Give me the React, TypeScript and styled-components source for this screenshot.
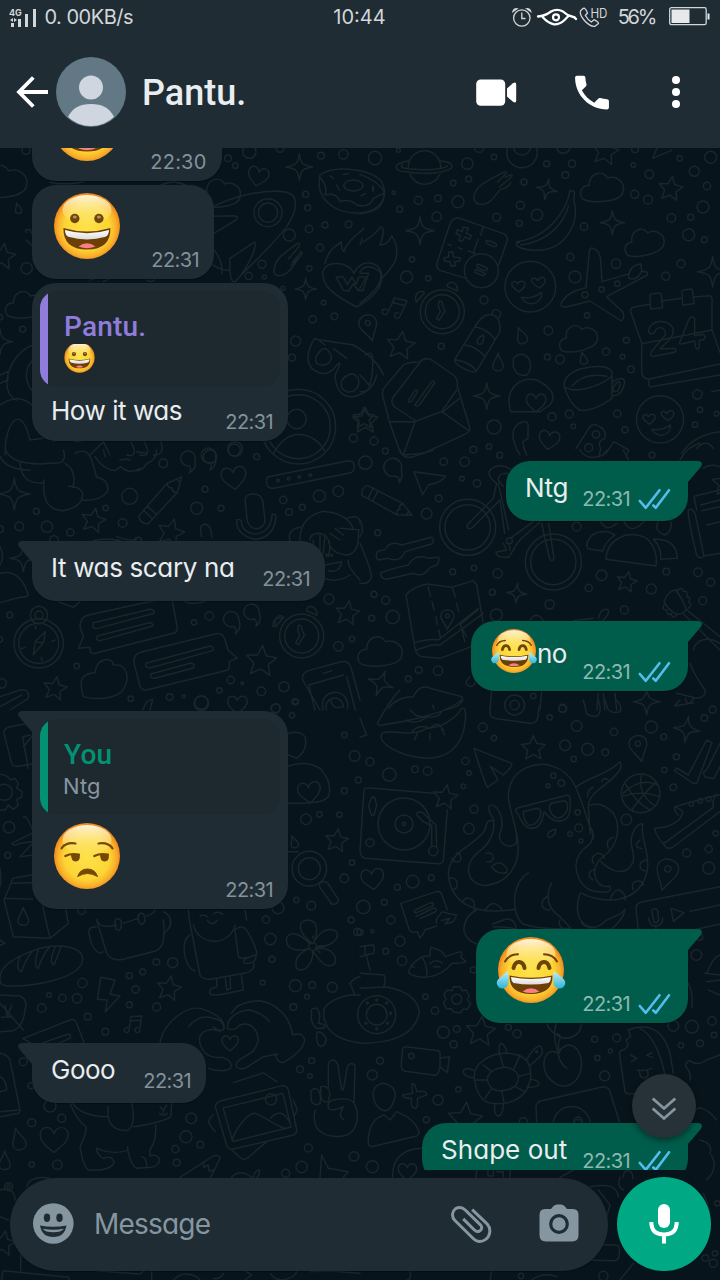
import React from 'react';
import styled, { createGlobalStyle } from 'styled-components';

const Global = createGlobalStyle`
  * { box-sizing: border-box; }
  body { margin: 0; background: #07141b; }
`;

const ui = `Inter, "Open Sans", "Liberation Sans", sans-serif`;

const Screen = styled.div`
  position: relative;
  width: 720px;
  height: 1280px;
  display: flex;
  flex-direction: column;
  overflow: hidden;
  background: #07141b;
  color: #e9edef;
  font-family: ${ui};
  font-feature-settings: 'cv11' 1;
`;

const Top = styled.header`
  position: relative;
  height: 148px;
  flex: none;
  background: #1f2c34;
`;

const StatusBar = styled.div`
  height: 34px;
  display: grid;
  grid-template-columns: 1fr auto 1fr;
  align-items: center;
  padding: 0 10px 0 9px;
  color: #d3d6d8;
  font-size: 20px;
  line-height: 34px;
`;

const StatusSide = styled.div<{ $end?: boolean }>`
  display: flex;
  align-items: center;
  justify-content: ${(p) => (p.$end ? 'flex-end' : 'flex-start')};
`;

const StatusText = styled.span<{ $track?: number; $ml?: number; $mr?: number }>`
  letter-spacing: ${(p) => p.$track ?? 0}px;
  margin-left: ${(p) => p.$ml ?? 0}px;
  margin-right: ${(p) => p.$mr ?? 0}px;
  white-space: nowrap;
`;

const AppBar = styled.div`
  height: 114px;
  display: flex;
  align-items: center;
  padding: 2px 40px 0 16px;
`;

const Contact = styled.h1`
  flex: 1;
  margin: 0 0 0 16px;
  padding-top: 1px;
  font: 500 36px/44px Roboto, sans-serif;
`;

const BarIcon = styled.svg<{ $ml?: number }>`
  display: block;
  flex: none;
  margin-left: ${(p) => p.$ml ?? 0}px;
`;

const WallpaperSvg = styled.svg`
  position: absolute;
  left: 0;
  top: 0;
  fill: none;
  stroke: #1a262b;
  stroke-width: 4.4;
  stroke-linecap: round;
  stroke-linejoin: round;
`;

const Messages = styled.main`
  position: relative;
  height: 1022px;
  flex: none;
  overflow: hidden;
  display: flex;
  flex-direction: column;
  justify-content: flex-end;
  padding: 0 32px;
`;

const List = styled.div`
  display: flex;
  flex-direction: column;
  margin-bottom: -13px;
`;

const Bubble = styled.article<{ $out?: boolean; $tail?: boolean; $w: number; $h: number }>`
  position: relative;
  flex: none;
  display: flex;
  flex-direction: column;
  width: ${(p) => p.$w}px;
  height: ${(p) => p.$h}px;
  align-self: ${(p) => (p.$out ? 'flex-end' : 'flex-start')};
  margin-top: ${(p) => (p.$tail ? 20 : 4)}px;
  background: ${(p) => (p.$out ? '#005d4b' : '#1f2c34')};
  border-radius: 24px;
  ${(p) => p.$tail && (p.$out ? 'border-top-right-radius: 0;' : 'border-top-left-radius: 0;')}
  box-shadow: 0 1px 1px rgba(0, 0, 0, 0.3);
`;

const TailSvg = styled.svg<{ $out?: boolean }>`
  position: absolute;
  top: 0;
  ${(p) => (p.$out ? 'right: -14px;' : 'left: -14px; transform: scaleX(-1);')}
`;

const BubbleRow = styled.div<{ $out?: boolean }>`
  flex: 1;
  display: flex;
  justify-content: space-between;
  padding: 0 ${(p) => (p.$out ? 17 : 14)}px 0 19px;
`;

const Body = styled.div<{ $top: number; $track?: number }>`
  display: flex;
  padding-top: ${(p) => p.$top}px;
  font-size: 26px;
  line-height: 32px;
  letter-spacing: ${(p) => p.$track ?? 0}px;
  white-space: nowrap;
`;

const EmojiSlot = styled.span<{ $large?: boolean }>`
  flex: none;
  margin-left: ${(p) => (p.$large ? -0.5 : 0)}px;
`;

const InlineText = styled.span`
  padding-top: 11px;
  margin-left: -1px;
`;

const Meta = styled.div<{ $out?: boolean; $low?: boolean }>`
  align-self: flex-end;
  display: flex;
  align-items: center;
  gap: 6px;
  height: 24px;
  margin-bottom: ${(p) => (p.$low ? 7 : 10)}px;
  font-size: 20px;
  line-height: 24px;
  color: ${(p) => (p.$out ? '#8fb9b0' : '#83929b')};
`;

const Time = styled.span<{ $wide?: boolean }>`
  letter-spacing: ${(p) => (p.$wide ? 0.2 : -0.6)}px;
  margin-right: ${(p) => (p.$wide ? 1.5 : 1)}px;
`;

const Quote = styled.div`
  display: flex;
  height: 96px;
  flex: none;
  margin: 8px 8px 0;
  border-radius: 17px;
  overflow: hidden;
  background: #1e292f;
`;

const QuoteBar = styled.div<{ $color: string }>`
  width: 8px;
  background: ${(p) => p.$color};
`;

const QuoteText = styled.div`
  display: flex;
  flex-direction: column;
  padding: 20px 0 0 16px;
  font-size: 22px;
  line-height: 28px;
  color: #8696a0;
`;

const QuoteName = styled.div<{ $color: string }>`
  font: 500 28px/32px Roboto, sans-serif;
  letter-spacing: 0.2px;
  color: ${(p) => p.$color};
`;

const QuoteBody = styled.span`
  margin: 1px 0 0 -1px;
`;

const QuoteEmoji = styled.div`
  height: 30px;
  margin-top: 1px;
  overflow: hidden;
  display: flex;
  align-items: flex-start;
  svg { margin: -3px 0 0 -1px; }
`;

const Footer = styled.footer`
  position: relative;
  flex: 1;
  display: flex;
  padding: 7px 9px 0 10px;
  justify-content: space-between;
`;

const Composer = styled.div`
  width: 598px;
  height: 93px;
  margin-top: 1px;
  border-radius: 47px;
  background: #1f2c34;
  display: flex;
  align-items: center;
  padding: 0 29px 1px 22px;
  box-shadow: 0 1px 1px rgba(0, 0, 0, 0.3);
`;

const Placeholder = styled.span`
  flex: 1;
  margin-left: 20px;
  font-size: 28px;
  line-height: 36px;
  letter-spacing: -0.8px;
  color: #8696a0;
`;

const MicButton = styled.button`
  width: 94px;
  height: 94px;
  padding: 0;
  border: 0;
  border-radius: 50%;
  background: #00a884;
  display: flex;
  align-items: center;
  justify-content: center;
`;

const ScrollDown = styled.button`
  position: absolute;
  left: 632px;
  top: 1074px;
  width: 64px;
  height: 64px;
  padding: 0;
  border: 0;
  border-radius: 50%;
  background: #273138;
  box-shadow: 0 3px 6px rgba(0, 0, 0, 0.4);
`;

/* ---------- Wallpaper doodles ---------- */

const Dots = ({ v }: { v: string }) => (
  <>
    {v.split(' ').map((s, i) => {
      const [x, y, r] = s.split(',');
      return <circle key={i} cx={x} cy={y} r={r} />;
    })}
  </>
);

type Place = { x: number; y: number; s?: number; a?: number };
const at = ({ x, y, s = 1, a = 0 }: Place) => `translate(${x} ${y}) rotate(${a}) scale(${s})`;
const shape = (d: string) => (p: Place) => (
  <path transform={at(p)} d={d} strokeWidth={4.4 / (p.s ?? 1)} />
);

const Star = shape('M0,-40 L11,-15 38,-12 18,6 24,33 0,19 -24,33 -18,6 -38,-12 -11,-15Z');
const Spark = shape('M0,-40 C4,-10 8,-6 40,0 C8,5 5,9 0,40 C-5,9 -8,5 -40,0 C-8,-6 -4,-10 0,-40Z');
const Heart = shape('M0,28 C-20,12 -34,0 -30,-16 C-26,-32 -6,-32 0,-14 C6,-32 28,-32 31,-14 C34,2 16,14 0,28Z');
const Cloud = shape('M-58,34 C-74,14 -60,-8 -40,-6 C-40,-44 0,-54 14,-28 C40,-38 68,-16 60,12 C54,42 -26,48 -58,34Z');
const Drop = shape('M0,-28 C4,-10 16,0 16,12 C16,30 -16,30 -16,12 C-16,0 -4,-10 0,-28Z');
const Pin = shape('M0,46 C-10,20 -28,8 -28,-12 C-28,-46 28,-46 28,-12 C28,8 10,20 0,46Z M8,-12 A8,8 0 1 1 -8,-12 A8,8 0 1 1 8,-12');
const Note = shape('M-18,24 V-28 L22,-36 V18 M-18,-12 L22,-20 M-18,24 A9,9 0 1 1 -24,16 M22,18 A9,9 0 1 1 14,10');
const Pencil = shape('M-80,-16 L40,-18 80,0 40,20 -80,18 Q-94,0 -80,-16Z M-60,-16 V18 M-44,-16 V18 M40,-18 Q30,-6 40,0 Q30,10 40,20 M66,-7 V7');
const Clock = shape('M66,0 A66,66 0 1 1 -66,0 A66,66 0 1 1 66,0 M51,0 A51,51 0 1 1 -51,0 A51,51 0 1 1 51,0 M-10,-32 Q0,-34 0,-22 L8,-2 -10,26 -18,20 -6,0 -12,-18Z M-78,-28 C-88,-60 -60,-66 -54,-56Z M14,-76 C16,-96 46,-92 46,-62Z');
const Quotes = shape('M-18,-6 A20,20 0 1 0 -34,8 Q-26,18 -34,28 Q-14,18 -18,-6 M38,-14 A20,20 0 1 0 22,0 Q30,10 22,20 Q42,10 38,-14');
const Face = shape('M76,0 A76,76 0 1 1 -76,0 A76,76 0 1 1 76,0 M-34,16 C-50,4 -60,-4 -54,-12 C-46,-20 -40,-14 -38,-8 C-32,-20 -14,-18 -16,-6 C-16,2 -26,8 -34,16Z M28,4 C10,-6 0,-14 4,-22 C10,-30 18,-24 22,-18 C28,-32 48,-30 44,-16 C44,-8 36,-2 28,4Z M-26,32 Q4,38 34,18 C36,56 -14,62 -26,32Z');
const Photo = shape('M-98,-36 L80,-80 Q96,-82 100,-68 L124,46 Q126,60 112,64 L-60,104 Q-76,106 -80,92 L-112,-18 Q-114,-30 -98,-36Z M-90,-16 L84,-58 108,40 -62,82Z M-64,78 C-50,40 -20,0 4,0 C30,10 60,34 90,44 M48,14 Q80,-20 104,26');

const Tile = ({ x, y, children }: { x: number; y: number; children: React.ReactNode }) => (
  <g transform={`translate(${x} ${y}) scale(0.33333)`}>{children}</g>
);

const Wallpaper = () => (
  <WallpaperSvg width="720" height="1280" viewBox="0 0 720 1280" aria-hidden="true">
    <Tile x={0} y={145}>
      <Dots v="78,16,12 684,40,10 706,62,8 748,20,20 840,10,12 963,32,10 1030,28,14 917,148,9 923,188,9 927,252,11 975,240,9 1046,238,10 868,270,18 960,308,11 786,358,12 928,370,8 746,393,11 793,396,6 80,370,17 849,430,6 971,473,7 938,523,11 1003,514,10 887,588,15 876,638,10 68,553,9 0,517,8 1060,880,12 705,912,22 630,935,20 804,203,42 804,203,29 895,845,112 895,845,96 890,822,29" />
      <Star x={8} y={335} a={8} /><Star x={1096} y={828} />
      <Spark x={898} y={66} /><Spark x={917} y={432} s={0.8} /><Spark x={0} y={590} s={0.95} />
      <Heart x={774} y={95} a={12} /><Cloud x={10} y={110} s={1.15} /><Cloud x={660} y={145} s={1.0} /><Cloud x={78} y={480} s={0.95} />
      <Drop x={54} y={190} s={0.6} a={-15} />
      <path d="M630,190 C700,152 800,130 860,142 C900,152 890,200 860,245 C810,310 760,350 705,410 M642,214 L700,212 Q720,215 708,225 L642,265 M690,340 L762,292 Q770,290 765,306 C755,345 720,400 705,410 C690,416 688,370 690,340 M642,315 Q670,350 665,385 M610,340 Q660,380 690,375" />
      <path d="M822,382 C820,340 860,320 892,296 Q904,290 896,306 L866,342 M902,320 Q912,322 900,334 L872,362 M904,320 L878,350 M822,382 C830,402 860,390 878,366 L900,334" />
      <path d="M960,90 C1000,60 1110,70 1145,110 C1165,150 1150,195 1080,205 C1000,206 945,160 960,90Z M962,100 Q985,128 975,150 Q1010,140 1020,170 Q1050,160 1070,180 Q1110,190 1120,160 L1150,145 M1088,125 A28,16 0 1 1 1032,118 A28,16 0 1 1 1088,125 M990,92 L1000,100 M1010,120 L1018,135 M1120,125 V138 M1030,88 L1045,86" />
      <path d="M1070,486 C1000,450 960,420 970,375 C985,345 1045,350 1062,385 C1080,340 1140,345 1145,390 C1150,430 1110,465 1070,486Z M975,355 C985,310 1015,300 1024,290 Q1022,310 1032,320 C1040,290 1070,270 1092,250 M1008,396 H1030 L1042,418 1056,396 1068,418 1076,396 H1098 L1076,438 1060,416 1046,438 1030,436Z" />
      <path d="M942,582 L1060,600 Q1130,640 1150,690 M942,582 Q910,640 935,670 Q980,705 1010,660 Q1030,640 1005,690 Q1010,760 1060,755 Q1120,740 1130,690 M960,618 C940,640 945,660 965,660 C990,660 1000,640 990,625 Q975,600 960,618 M1045,690 C1020,700 1015,730 1040,740 C1070,745 1080,720 1075,700 Q1060,680 1045,690 M948,580 L975,600 M1000,610 L1040,640" />
      <path d="M820,925 Q850,872 895,868 Q950,872 975,920 M840,772 Q790,800 800,890 M100,600 C30,620 -10,740 50,765 M98,645 Q60,690 98,740 M0,690 L24,680 V705 L0,715 M0,780 Q60,740 100,785 M16,930 C10,850 60,760 90,885 L130,880 M160,890 Q190,870 230,890 L290,880 M270,930 L310,890 330,930 M390,885 Q420,940 380,930 M430,885 Q460,940 420,930 M480,885 Q500,930 460,930" />
      <path d="M80,262 Q70,250 90,255 L110,290 M78,285 L100,305 M270,405 L290,400 M310,410 L330,400 M440,405 Q455,415 465,403 M480,122 Q520,100 560,122 M150,112 Q200,122 250,110" />
    </Tile>
    <Tile x={360} y={145}>
      <Dots v="45,39,20 115,16,6 322,56,17 402,36,8 326,102,9 280,114,8 357,8,14 101,143,5 175,166,12 234,160,10 294,170,18 119,193,9 230,215,14 410,217,12 492,111,9 560,56,9 636,56,11 616,90,10 481,181,12 531,210,17 478,235,9 486,22,46 610,5,20 672,245,11 825,13,10 820,60,7 868,88,13 824,148,12 864,164,13 959,40,8 1052,37,18 1003,79,15 1041,123,11 1029,186,18 992,217,9 934,219,13 986,269,18 1033,284,9 963,356,12 917,394,12 768,356,14 631,336,11 645,396,18 725,433,8 772,416,8 675,449,9 156,343,8 205,400,8 140,396,18 372,465,12 244,604,9 681,511,8 565,557,13 562,636,9 600,643,13 738,620,11 788,635,7 799,586,9 813,673,10 576,815,12 628,807,12 640,844,7 772,806,11 795,854,9 402,846,21 387,905,8 340,914,10 42,888,12 76,918,9 1012,748,14 1020,794,8 1070,806,7 1005,839,8 364,377,51 708,868,11 686,908,12 486,4,26" />
      <Star x={736} y={20} a={10} s={1.05} /><Star x={932} y={132} a={8} s={0.95} /><Star x={122} y={602} s={1.1} a={8} /><Star x={12} y={820} s={0.85} />
      <Spark x={560} y={133} s={0.8} a={12} /><Spark x={180} y={257} s={1.05} /><Spark x={757} y={233} s={0.9} /><Spark x={1058} y={380} s={1.15} /><Spark x={380} y={753} />
      <Cloud x={728} y={128} s={1.02} /><Cloud x={854} y={292} s={0.95} a={-8} /><Cloud x={656} y={580} s={0.92} a={-8} />
      <Face x={511} y={425} /><Face x={900} y={823} s={0.93} />
      <Clock x={247} y={500} />
      <Note x={108} y={490} s={0.95} a={25} /><Pin x={26} y={545} s={0.95} a={-15} />
      <Drop x={484} y={572} s={0.95} a={-20} /><Drop x={414} y={652} /><Drop x={670} y={640} s={0.7} a={-12} /><Heart x={567} y={886} a={8} /><Heart x={528} y={774} s={0.95} />
      <path d="M145,66 A48,48 0 0 1 242,66 M145,48 C90,56 105,82 140,80 C190,90 280,84 276,62 Q270,50 242,48 M128,58 C110,72 150,72 190,74 C230,74 260,68 262,62 M150,88 Q165,118 195,118 Q225,116 240,88" />
      <path d="M342,160 C340,120 400,100 430,82 Q442,76 436,88 L412,112 M436,96 L452,90 Q462,90 452,98 L418,126 M452,112 Q450,125 420,134 C400,160 390,175 370,178 Q344,180 342,160 M0,88 Q50,105 72,138 Q78,200 0,206 M38,122 V138 M4,152 L16,146" />
      <path d="M470,290 C560,280 620,200 630,136 L643,140 642,168 C660,230 620,310 540,316 Q480,316 470,300 Q466,290 478,292 M482,300 C560,290 610,240 626,182" />
      <path d="M318,400 L240,376 Q226,368 232,350 L270,236 Q278,216 300,220 L430,266 Q444,272 442,286 L416,360 M370,245 L362,270 M355,282 L344,312 340,326 M264,298 L274,302 M295,308 L306,312 M325,318 L345,325" />
      <path d="M310,246 L325,250 318,264 334,272 330,283 314,276 306,290 296,286 302,272 288,264 292,254 306,260Z M266,322 L278,320 280,336 300,338 300,348 284,350 286,362 274,364 270,350 254,348 252,338 266,336Z M378,288 Q385,284 408,296 Q414,306 400,304 L380,296Z M352,358 Q360,358 382,370 Q384,378 370,376 L350,366Z M346,374 Q356,374 376,386 Q376,394 364,390 L344,382Z" />
      <path d="M678,428 L688,320 Q690,300 710,316 Q722,326 722,350 L726,410 L808,386 Q810,362 842,356 L846,380 Q866,378 862,390 L740,455 788,500 Q796,520 784,528 L690,468 620,486 Q600,488 604,474 Q620,440 678,428 M808,386 Q800,404 820,402 Q840,396 842,380" />
      <path d="M845,594 L812,500 Q810,490 822,486 L870,478 M904,468 L966,460 M1002,456 L1048,452 Q1058,454 1056,470 V555 L1090,650 M845,594 V684 Q850,704 868,702 L1090,655 M868,704 L866,720 Q870,730 882,724 L1080,690 M845,596 L1056,555 M870,452 Q868,446 880,446 L896,444 Q902,442 904,452 L908,488 872,492Z M966,440 Q966,434 976,434 L992,432 Q998,432 998,440 L1002,476 968,480Z" />
      <path d="M866,560 C866,520 935,520 940,556 C940,580 920,590 900,612 L944,610 Q952,616 944,622 L882,634 Q868,636 874,620 L916,570 C920,545 890,540 884,562 Q870,572 866,560 M960,590 L988,520 Q996,510 1004,520 L1004,572 1030,568 Q1040,576 1030,584 L1018,586 V608 Q1010,618 1006,604 L1004,588 968,596 Q954,600 960,590Z" />
      <path d="M286,640 L345,545 Q370,500 400,510 Q424,520 420,560 L350,678 Q340,688 300,664 Q280,652 286,640 M286,644 Q330,650 350,678 M345,546 Q380,550 404,582 M315,600 Q350,605 374,634 M396,506 Q400,488 414,496 Q428,500 418,518 M352,596 Q348,580 370,570 Q374,590 362,598Z" />
      <path d="M70,760 Q62,740 76,724 L130,660 Q144,650 170,652 M176,652 Q200,632 220,648 L280,690 Q294,700 292,724 L330,850 Q330,862 310,870 L190,925 130,930 M180,652 L100,756 Q90,770 104,786 L168,828 M290,735 L245,800 168,828 M88,830 H165 L130,930 M88,830 L70,760 M88,830 L122,925 M245,800 L328,858 M298,760 L250,800 M145,766 L165,736 Q174,732 172,742 L155,768 Q146,776 145,766 M165,780 L215,710 Q224,704 224,714 L178,780 Q168,788 165,780" />
      <path d="M460,640 Q485,615 506,640 Q520,670 500,690 Q470,696 460,665Z M452,800 C430,720 490,695 530,705 Q600,740 570,780 L540,800 Z M612,724 Q610,690 660,672 Q740,654 756,680 V760 Q700,800 660,796 Q630,780 612,724 Q640,745 700,724 Q740,710 756,692 M636,724 Q670,680 740,694 M756,712 Q790,690 794,710 Q786,756 756,752 M762,722 Q780,700 780,718 Q776,746 760,738Z" />
      <path d="M0,380 Q20,350 60,380 Q75,420 0,475 M0,300 Q5,290 6,280 M10,290 Q40,275 62,245 Q78,250 60,300 Q85,300 95,272 Q120,310 105,350 Q95,370 65,400 M0,385 H26 L8,438 0,436 M15,630 Q35,615 38,640 Q40,690 28,720 L0,690 M0,740 Q30,740 30,722 M878,40 L895,0 M878,40 L935,16" />
      <path d="M480,930 C450,880 450,840 490,830 Q508,828 504,850 L504,880 488,890 Q490,910 500,930 M648,910 L690,845 Q700,832 720,846 Q740,856 734,880 Q710,890 722,910 L718,930 M738,925 L762,890 806,915 800,930 M965,925 Q1000,870 1080,860 M1010,910 Q1040,880 1060,910 M1055,740 L1080,735" />
    </Tile>
    <Tile x={360} y={450}>
      <Dots v="16,38,20 251,35,11 314,35,14 419,16,9 306,86,7 351,100,11 236,145,10 200,191,16 53,248,9 650,230,13 876,15,9 278,365,9 342,354,8 413,370,14 725,376,16 874,417,15 686,414,11 793,480,12 569,463,14 397,427,9 409,495,18 42,433,9 77,451,12 98,501,20 35,505,9 919,365,10 1014,367,13 1052,397,12 1028,452,12 176,660,10 234,662,14 145,686,9 323,232,84 323,232,68 580,336,84 580,336,68 448,272,9 520,738,8 608,775,12 464,765,14 464,765,30" />
      <Star x={800} y={396} s={0.8} a={12} /><Star x={1095} y={100} />
      <Spark x={470} y={430} s={0.75} a={5} /><Spark x={62} y={700} a={20} /><Spark x={860} y={755} />
      <Cloud x={62} y={605} s={1.05} /><Pencil x={85} y={158} a={28} /><Pin x={262} y={506} s={0.7} />
      <path d="M118,98 Q120,80 105,78 A27,27 0 1 1 124,60 Q130,80 118,98 M162,65 L256,78 Q250,95 205,105 L188,134Z M120,0 Q130,30 160,20 L220,0" />
      <path d="M322,224 L400,145 410,100 Q380,80 390,60 Q420,35 455,60 Q460,75 440,70 Q415,70 415,90 L430,110 M336,234 L420,150 434,250 M322,224 Q318,240 336,234 M415,100 L446,240 M465,290 L480,270 540,215 M520,215 L455,262 M430,280 L440,300 408,306 Q408,320 430,322 L446,322 464,294 M545,220 L568,325 Q576,338 582,325 L566,220 M448,285 L450,300" />
      <path d="M50,310 Q50,300 75,300 Q90,270 125,285 L215,262 Q226,270 215,282 L135,305 Q120,340 85,325 L55,330 Q46,325 50,310 M62,370 Q70,362 145,345 Q165,310 205,325 L235,322 Q242,330 230,345 L210,352 Q190,384 160,370 L80,388 Q62,386 62,370" />
      <path d="M738,328 C740,270 800,235 860,265 Q895,300 888,348 L738,328 M680,285 Q690,240 745,245 L765,255 Q735,275 728,303 L684,296Z M880,268 Q950,265 952,325 L902,328 Q905,290 880,268 M720,212 Q740,250 770,220 M790,210 Q810,260 855,212 M895,212 Q880,245 915,255 Q940,240 932,212" />
      <path d="M985,180 Q982,200 1010,315 Q1020,330 1032,318 L1005,190 Q995,172 985,180 M1002,140 L1010,180 M1005,138 L1080,120 M1032,318 L1080,310 M1022,165 L1080,150 M1025,182 L1080,170 M1040,225 L1080,215 M960,30 Q980,-10 1020,-20 M1030,55 Q1050,40 1080,50 M660,0 Q680,35 730,15 L740,0 M790,0 L805,30" />
      <path d="M138,435 Q160,410 200,402 L275,412 340,392 350,405 370,520 M138,435 L165,595 Q170,620 190,620 L240,625 360,580 M165,578 Q210,565 235,570 L355,475 M170,600 Q220,580 240,585 L370,490 M355,478 L300,525 320,560 M204,410 L212,440 M216,455 L222,480 M228,500 L232,525 M236,540 L242,565 M278,415 L286,440 M290,460 L296,485 M306,540 L314,575" />
      <path d="M912,455 Q925,420 948,420 Q980,470 978,478 Q965,498 945,490 Q925,480 912,455 M978,478 L1080,560 M968,490 L1080,600 M950,425 Q965,405 970,425 Q985,420 980,440 Q995,440 986,458 Q1000,462 985,475 M912,465 Q905,480 920,480 Q920,500 934,490 Q935,510 950,495 M1000,600 Q1010,560 1060,570 L1080,580 M990,640 Q1000,670 1035,720 Q1040,740 1010,745 L950,730 M975,745 Q985,775 1000,745 M0,280 Q30,350 35,380 Q25,405 0,400 M0,210 Q15,240 0,260" />
      <path d="M85,775 Q110,740 160,740 Q180,700 210,715 L305,740 Q315,752 290,770 L255,780 M390,780 L395,720 M540,780 L545,725 M710,780 L715,730 M735,780 L730,730 M770,780 L765,730 M640,512 L700,505 M715,505 Q725,470 745,480 Q748,495 728,512 M510,510 Q530,480 550,512 M345,690 A14,14 0 1 1 318,695 L330,680" />
    </Tile>
    <Tile x={0} y={450}>
      <Dots v="490,40,13 770,20,9 703,0,18 389,139,24 368,219,13 590,175,18 615,118,9 663,175,9 109,184,9 58,229,13 141,230,17 211,247,11 317,174,8 0,238,10 850,150,11 958,138,18 1015,124,16 867,186,10 907,172,9 162,270,13 414,272,10 987,447,15 628,498,13 582,517,8 1015,589,14 1056,567,8 230,648,8 692,690,11 727,700,4 784,724,13 852,710,15 658,721,8 509,741,10 551,739,5 392,746,8 604,760,22 885,755,9 29,495,9 5,700,14 0,568,8 827,775,14 116,580,74 116,580,60 117,495,26 117,495,12 834,92,4 866,86,4 898,81,4 931,75,4 980,316,3 995,316,3" />
      <Star x={280} y={212} s={0.95} a={12} /><Star x={512} y={248} a={15} s={1.05} /><Star x={784} y={634} s={1.2} a={5} /><Star x={1042} y={490} s={0.95} a={8} /><Star x={165} y={716} s={0.92} a={10} />
      <Spark x={43} y={132} s={1.18} /><Spark x={70} y={325} />
      <Heart x={702} y={85} s={1.2} a={-8} /><Heart x={712} y={765} s={0.95} />
      <Quotes x={605} y={38} s={1.1} /><Quotes x={738} y={512} s={1.15} a={-12} />
      <Pencil x={487} y={145} s={1.08} a={-48} /><Clock x={905} y={558} />
      <path d="M805,80 L1045,32 Q1064,32 1062,52 Q1064,66 1045,70 L825,114 Q800,118 800,98 Q798,86 805,80 M735,150 Q738,130 762,132 Q782,132 788,152 L795,208 Q795,234 770,236 Q748,236 742,212Z M710,210 Q708,255 765,268 Q824,262 828,200 Q826,190 816,194 Q814,244 768,252 Q725,248 724,212 Q716,206 710,210" />
      <path d="M0,20 Q20,60 90,60 M18,0 Q30,40 120,42 L180,38 Q200,30 190,0 M60,40 Q65,105 130,98 L132,90 M195,40 Q230,60 220,110 L205,108 M132,98 Q125,180 190,182 Q250,170 248,130 Q240,110 218,112 M225,10 Q260,-10 275,30 L290,82 Q330,90 322,125 Q300,155 248,150 M285,20 Q310,60 345,62 L362,50 Q390,75 420,55 M470,0 Q470,30 440,40 Q430,60 410,62 M310,0 L316,20 M360,30 Q380,25 390,30 M410,5 L440,10" />
      <path d="M870,272 Q860,240 900,232 M900,270 Q900,200 970,184 Q1040,190 1060,235 M930,270 Q930,250 960,250 Q1000,260 985,320 M940,270 V300 M960,255 V310 M975,255 L970,310 M990,250 L1020,270 M1005,235 L1030,255 M1040,205 Q1080,190 1080,220 M1020,235 L1080,240 M985,270 Q990,310 1040,315 Q1080,310 1075,240 M975,345 Q1000,340 1025,335 Q1020,370 985,362 M975,385 Q1010,400 1050,375 M1045,330 Q1040,350 1080,390 M605,260 Q595,225 615,222 Q635,225 635,262 M280,272 Q320,262 360,272" />
      <path d="M0,370 Q60,355 85,435 Q80,442 60,442 L0,458 M0,290 Q15,320 0,345 M235,595 L250,560 240,530 Q240,500 265,495 L515,440 532,535 Q534,545 520,550 L285,610 Q268,612 270,592Z M280,518 L450,478 Q464,478 462,490 L290,536 Q274,536 280,518 M292,558 L448,518 Q460,518 458,528 L300,572 Q286,572 292,558" />
      <path d="M402,640 Q398,612 425,606 L645,552 Q668,546 675,570 L684,600 712,624 688,634 688,650 Q688,660 675,662 L440,720 Q425,722 420,708Z M438,640 L630,588 Q644,590 638,602 L450,654 Q434,654 438,640 M452,672 L570,640 Q588,640 580,654 L465,685 Q450,686 452,672 M175,455 L220,472 240,455 M555,455 Q580,468 620,452" />
      <path d="M136,545 L130,578 100,614 106,574Z M108,575 L130,580 M107,528 V538 M64,596 L76,592 M123,622 L127,632 M155,574 L166,570 M250,740 C235,690 245,670 285,668 C290,620 340,620 340,645 C385,640 392,690 365,725 C330,755 265,745 250,740 M0,740 L60,720 Q90,715 85,745 L30,780 M0,770 L65,735 M428,780 L440,755 458,748 450,780" />
      <path d="M960,780 L908,690 Q904,670 925,662 L1020,636 Q1045,630 1052,650 L1080,750 M945,780 L926,705 1030,675 M970,670 L996,662 M1040,680 L1066,780 M968,780 V755 A38,38 0 1 1 1042,775 M980,780 A26,26 0 1 1 1030,772 M992,752 Q1000,780 1024,770 M820,530 Q815,500 850,505 M350,260 Q390,275 410,268" />
    </Tile>
    <Tile x={0} y={700}>
      <Dots v="27,382,17 23,466,9 13,277,24 827,25,13 876,46,8 604,8,20 1064,168,16 1075,240,9 1033,272,9 918,358,16 958,343,8 1018,344,8 928,506,52 928,506,33 1056,488,8 1033,535,13 889,600,8 934,617,13 834,623,18 798,659,11 811,717,17 1053,660,9 1072,696,11 938,740,12 1033,105,8 245,632,11 887,5,8" />
      <Star x={1010} y={422} s={0.9} a={8} /><Drop x={882} y={426} s={0.7} a={-20} /><Drop x={70} y={650} /><Heart x={928} y={278} s={1.1} a={-8} />
      <path d="M0,222 Q28,228 30,240 L45,235 55,250 50,265 66,275 65,292 50,298 55,315 40,328 25,315 15,330 0,330 M12,100 Q10,85 30,80 L95,68 M12,100 L35,190 Q40,202 60,198 L95,192 M68,110 L92,105 M68,112 L85,205 M95,110 L70,140 M70,352 Q78,346 84,360 L98,390 M35,430 L95,400 M35,430 Q40,440 60,430 L95,425 M60,470 L98,430 M60,470 L98,465" />
      <path d="M12,600 Q30,560 38,535 L95,525 M12,600 L40,710 150,715 205,670 195,620 M15,595 L98,598 M125,605 L150,715 M38,550 L95,548 M0,505 Q5,540 0,560 M0,720 L15,730 0,735" />
      <path d="M290,660 Q300,688 350,675 M370,670 L415,655 M440,648 Q465,640 465,628 M345,665 Q345,655 354,656 Q362,656 364,666 V680 Q360,694 352,690 Q345,690 345,665 M415,650 Q415,640 424,640 Q432,640 434,652 V665 Q428,676 422,672 Q415,670 415,650 M290,680 Q260,680 268,705 M490,635 Q520,650 510,680" />
      <path d="M565,630 L568,660 M735,630 L740,660 M600,650 Q608,640 622,650 M640,642 Q650,632 668,642 M962,548 Q975,540 985,552 L1015,598 Q1015,615 995,612 L960,562 Q956,552 962,548 M865,455 H895 M865,310 Q930,310 950,305 M865,198 Q920,180 960,205 Q1000,250 985,290 Q970,305 950,305 M865,100 Q900,90 915,110 Q925,150 890,175 L865,165" />
    </Tile>
    <Tile x={360} y={700}>
      <Dots v="607,26,11 569,52,8 368,82,13 402,114,8 650,78,16 762,96,11 615,136,16 683,148,18 736,157,10 641,177,8 316,183,11 327,219,7 310,259,7 30,185,12 88,224,20 165,208,10 203,213,13 342,328,12 327,386,16 874,81,18 911,110,9 1033,54,10 1058,29,10 949,170,9 913,210,8 940,262,10 799,359,16 132,372,78 132,372,27 132,372,5 30,428,12 220,453,14 214,533,9 158,545,19 112,562,9 10,621,20 73,607,9 842,280,58 980,459,12 1046,447,11 1046,504,18 1067,400,8 994,312,7 1020,303,7 1046,297,7 564,257,6 604,249,10 580,227,8 653,337,8 656,384,12 630,402,7 663,423,6" />
      <Star x={520} y={145} s={0.95} /><Star x={256} y={292} s={0.95} a={8} /><Spark x={980} y={88} a={8} />
      <Heart x={38} y={538} s={1.1} a={-8} />
      <path d="M52,70 Q90,0 120,-30 M52,70 Q52,78 66,75 C140,65 260,40 305,0 M66,100 C90,85 150,115 200,85 C250,85 290,50 305,25 Q320,20 316,60 C310,140 260,180 190,174 C120,168 50,130 66,100 M150,30 L170,48 M140,60 Q160,75 190,58 L200,50 Q235,55 244,36 M218,15 L222,28 M165,45 L190,52 M155,95 Q180,70 210,85 Q235,60 250,90 M172,100 L163,120 M210,100 V120 M245,88 L254,104" />
      <path d="M12,270 Q15,262 30,264 L220,280 M262,330 L250,480 Q248,492 235,491 L15,475 Q0,470 0,450 L12,270 M38,290 Q46,290 46,300 L50,315 46,330 42,345 Q36,352 32,340 L26,318 32,300Z M170,340 Q185,330 195,345 L228,375 230,440 M215,375 V440 M170,345 L190,365 215,378" />
      <path d="M342,145 L455,190 Q458,200 430,225 L392,200 414,240 382,262 Q370,240 342,145 M468,430 C480,400 445,330 445,285 C450,200 540,180 580,200 C650,220 660,300 690,380 Q710,420 680,440 C650,460 640,500 655,530 C670,570 700,580 745,575 Q756,570 748,558 Q730,565 712,545 C690,510 715,480 735,465 C780,430 780,370 760,340 Q730,305 690,315 M650,260 C690,230 750,220 778,186 Q785,185 782,205 C760,250 690,270 685,315 L690,400" />
      <path d="M466,332 Q466,325 480,322 L620,286 Q632,284 630,300 C635,350 620,362 595,364 C565,360 560,340 552,335 C545,380 530,385 510,385 C485,380 480,345 466,332Z M490,335 L530,325 Q545,325 542,345 Q530,380 505,375 Q490,360 490,335 M568,320 Q570,310 580,308 L612,302 Q625,302 622,330 Q610,355 590,354 Q570,345 568,320 M563,402 Q570,390 588,388 Q586,408 570,412 Q562,412 563,402" />
      <path d="M468,430 C450,450 410,430 420,400 Q435,365 415,330 Q400,310 390,316 Q380,330 400,355 Q410,420 350,460 C310,500 320,550 375,557 C440,550 490,500 470,400 M400,365 Q390,355 380,370 C375,430 270,440 265,520 C270,600 330,650 465,628 M275,475 Q290,495 302,480 Q305,460 290,458 M268,535 Q290,530 292,555 Q290,570 275,568 M308,605 Q320,585 340,602 Q345,620 342,630 M376,630 Q400,590 428,632 M378,460 Q400,455 400,475 Q395,490 380,485 M395,500 Q420,475 440,505 L440,518 Q410,525 395,500" />
      <path d="M505,518 C450,555 455,650 490,672 Q540,690 630,685 M575,548 C550,600 570,630 600,650 L632,685 M565,588 Q540,600 548,620 Q555,632 570,630 M600,660 Q590,670 610,688 M350,630 Q310,650 312,695 Q320,720 350,732 M398,672 Q420,665 430,660 Q450,650 465,670 L468,685 M400,680 Q440,680 465,686 M660,580 C640,640 660,680 700,682 M665,580 C720,610 840,620 862,510 C870,450 840,420 848,372 Q840,368 825,385 C790,440 850,470 800,510 C770,525 740,500 722,485 M840,420 Q825,430 832,442 L845,446 M858,480 Q835,485 842,505 Q850,515 860,512 M820,570 Q810,545 835,542 Q850,545 850,555 M750,600 Q760,570 775,570 Q795,575 796,600 M700,490 Q690,470 712,460 Q730,460 732,475 M745,445 Q735,420 760,412 M688,380 Q700,385 700,415 M682,290 Q685,265 700,262 M725,245 Q730,230 745,240 M665,670 Q700,700 740,660 Q790,640 795,628 Q790,660 750,690 M700,540 Q680,530 692,512 L702,510" />
      <path d="M790,280 Q840,230 895,255 M785,290 Q840,270 900,290 M845,225 Q830,280 885,318 M795,250 Q830,310 870,330 M815,330 Q850,280 890,245" />
      <Pin x={836} y={142} s={0.95} a={-12} /><Pin x={920} y={520} s={1.15} a={15} />
      <path d="M943,212 L950,204 985,225 1040,120 1056,128 1010,250 1000,250Z M1035,230 Q1025,215 1040,210 L1080,130 M1035,230 L1062,236 1080,200 M945,320 L1060,288 1080,285 M945,320 Q970,330 968,340 Q955,380 885,385 Q882,400 920,444 L935,444 1080,335 M912,430 L1060,322 Q1055,300 1070,282 M945,320 Q940,330 955,345" />
      <path d="M122,610 L230,575 Q242,572 246,585 L262,630 M122,610 L148,690 Q155,700 172,695 L180,714 Q190,705 195,690 L230,678 M165,630 L212,608 Q225,608 218,618 L170,638 Q160,640 165,630 M168,650 L222,624 Q234,626 226,636 L180,656 M230,670 Q225,655 240,645 Q245,630 262,640 L290,645 280,665 255,672 270,655 245,662" />
      <path d="M835,690 L828,625 Q828,610 845,606 L1080,560 M840,690 H980 M990,634 L1080,615 M1000,690 L1080,672 M875,632 Q885,620 893,632 L896,660 Q892,672 882,666Z M866,655 Q870,680 890,678 Q908,675 908,655 M888,680 V690 M933,625 L972,638 940,664Z M390,20 V40 Q392,54 410,56 L510,70 Q530,72 534,50 L537,20 M670,0 L680,40 Q690,52 710,48 Q722,44 720,20 L716,0 M735,0 L745,30 Q760,42 780,35 Q788,20 770,0 M945,16 L960,0 M945,18 L1000,8 M0,55 L20,105 0,112" />
    </Tile>
    <Tile x={360} y={920}>
      <Dots v="37,34,5 120,63,15 77,94,9 126,122,14 93,0,12 0,37,9 196,230,8 225,272,11 250,337,18 290,327,10 281,373,11 60,422,10 37,465,15 445,322,9 471,341,12 295,508,8 234,540,15 199,599,9 704,358,9 770,354,12 751,393,6 712,414,8 734,468,15 940,318,16 996,320,19 1056,303,13 963,376,8 1020,370,10 1062,345,8 1019,52,9 1009,105,16 37,740,18 50,284,57 50,284,31 290,238,15 154,408,8 654,603,12 490,605,12 530,395,3 340,150,9 483,1068,8 730,1068,14 1036,1014,10 1065,1000,8 1060,1030,12 1072,850,8" />
      <Star x={362} y={335} s={1.15} a={5} /><Star x={315} y={600} s={1.35} a={5} /><Heart x={142} y={756} s={0.9} />
      <path d="M0,205 Q60,200 85,202 Q170,220 178,275 C170,330 120,370 0,370 M70,202 Q80,180 72,165 L0,160 M0,80 L40,74 Q46,90 40,100 L0,110 M15,78 V105 M20,110 L30,150" />
      <Dots v="50,240,3 22,249,3 80,249,3 92,280,3 83,310,3 50,326,3 18,310,3" />
      <path d="M145,158 C155,120 195,105 210,108 L212,82 Q250,90 255,110 L300,95 Q310,98 302,112 L318,124 Q310,130 275,130 C240,175 180,182 145,158 M185,110 Q205,140 200,170 M158,140 L162,142 M210,130 Q230,115 248,130 M220,140 H240" />
      <path d="M280,200 L302,200 306,212 318,210 328,228 322,240 332,250 322,268 308,268 302,278 280,276 274,266 260,266 250,248 258,238 252,222 262,210 276,212Z M128,385 Q135,378 150,382 L235,392 Q242,395 240,415 L268,410 262,458 240,440 Q236,465 225,466 L135,454 Q122,450 124,430Z M240,415 V440" />
      <path d="M345,485 C330,430 400,390 460,402 C520,410 520,470 500,510 C470,555 400,560 370,540 Q350,520 345,485 M385,490 C370,450 430,435 450,445 C490,460 480,500 440,510 Q400,520 385,490 M370,435 L395,455 M420,405 L430,440 M478,410 L460,450 M510,460 L475,470 M495,515 L465,500 M432,548 L425,512 M375,535 L395,505 M345,480 L380,480 M418,400 Q415,370 425,370 Q440,380 440,400 M500,420 Q520,380 540,378 Q555,390 540,410 L512,435 M510,478 Q540,480 536,495 Q520,505 500,500 M340,450 Q310,440 310,455 Q310,470 342,474 M405,550 Q400,585 415,588 Q430,585 430,552" />
      <path d="M560,310 Q570,340 600,345 M665,310 Q660,355 610,355 L590,345 M595,400 C560,380 540,420 560,465 C590,510 640,510 660,460 C675,410 650,375 625,375 Q600,380 595,405 Q600,430 620,445 M590,310 Q575,340 595,400 M600,355 Q590,380 600,395" />
      <path d="M778,400 L795,515 Q800,525 830,520 M778,400 Q780,390 795,388 L805,375 798,360 812,350 805,330 Q830,318 860,322 Q910,330 930,400 L940,460 M840,325 Q890,350 915,465 M812,405 L830,415 814,425 M876,398 L860,406 878,412 M832,450 Q850,455 875,445 M838,455 L842,470 Q855,480 865,465 L862,452 M978,440 Q975,425 990,422 Q1010,440 1040,420 L1080,405 M978,440 Q995,460 990,480 M1040,160 Q1060,110 1080,105 M1035,160 L1080,165 M1040,185 L1080,180 M1045,210 L1080,225 M985,190 Q1000,220 995,262" />
      <path d="M40,530 Q35,495 72,490 Q110,500 105,530 Q95,575 72,572 Q45,565 40,530 M25,675 Q22,600 72,585 L90,600 110,575 Q170,600 178,640 L170,648 35,680Z M155,492 Q165,485 170,515 Q200,510 200,525 L172,535 Q175,565 165,565 Q150,560 155,535 Q125,535 128,525 L158,520Z M530,605 L528,560 Q530,545 545,542 L730,500 Q745,500 750,515 L778,605 M580,605 A56,56 0 0 1 690,605 M640,605 A18,18 0 0 1 668,605 M1020,660 Q1060,670 1050,700 Q1080,740 1040,780 M1000,580 Q1020,540 1070,600" />
      <path d="M98,772 Q95,690 185,685 M350,750 L348,772 M384,750 V768 H400 V750 M410,755 H430 V772 M450,750 V772 M600,772 L640,750 M690,800 C750,790 770,800 775,830 M715,810 L750,855 740,890 M790,772 Q790,750 805,752 Q820,755 818,775 M720,975 L770,975 Q780,978 778,1000 Q778,1022 765,1022 L680,1020 M1030,820 Q1045,850 1050,880 M780,1080 L820,1030 M515,1080 Q550,1055 590,1070 M150,1052 Q155,1080 140,1080 M395,1055 L390,1080 M1020,870 L1040,860 M780,772 Q770,800 790,810" />
    </Tile>
    <Tile x={0} y={920}>
      <Dots v="518,128,15 469,126,10 428,155,9 388,167,9 407,208,11 388,254,9 470,261,12 247,189,14 187,234,11 231,235,14 125,264,13 147,225,7 263,290,10 316,335,10 816,118,9 788,188,7 886,197,18 937,195,10 997,202,15 921,230,7 880,261,10 935,422,9 900,448,10 930,468,7 813,538,17 574,595,16 558,650,18 601,674,10 526,687,11 530,728,10 150,558,18 185,595,12 95,608,12 95,733,8 172,734,14 925,684,12 905,741,17 857,760,12 1062,709,14 70,425,12 93,497,9 26,800,12 26,800,5" />
      <Star x={507} y={206} s={0.95} a={10} /><Star x={10} y={970} s={0.95} a={10} /><Heart x={162} y={660} s={1.35} /><Heart x={690} y={370} s={0.8} />
      <Drop x={55} y={658} s={1.25} a={-15} /><Drop x={14} y={722} s={1.05} /><Note x={404} y={314} s={0.8} a={8} />
      <path d="M0,180 C-5,140 40,110 120,85 C180,70 250,80 248,120 C240,180 90,200 20,198 Q0,195 0,180 M60,108 Q45,150 65,155 Q75,120 95,97 M115,90 Q98,140 115,145 Q125,110 148,82 M165,82 Q145,130 162,135 Q172,110 182,82 M302,172 L345,180 330,222 360,228 316,275 322,240 292,238 Q298,200 302,172Z" />
      <path d="M290,0 L320,100 Q335,125 370,118 L470,92 Q500,75 490,0 M268,45 Q275,90 300,100 L310,95 M490,40 Q515,25 510,0" />
      <path d="M568,0 L600,165 Q610,182 640,176 L740,158 Q765,150 762,130 M570,45 Q545,60 555,110 Q565,150 585,152 M705,30 Q720,15 735,25 Q755,50 770,95 Q770,135 735,130 Q725,120 740,115 M705,30 L715,110 Q725,122 765,105 M650,178 V200 Q625,205 630,222 Q640,228 672,222 L730,210 724,162 M676,175 L680,210 692,205 690,170 M580,15 A65,65 0 0 0 706,15 M622,0 Q635,22 652,0" />
      <path d="M938,70 C895,40 890,5 920,0 C955,0 955,30 942,65 C970,15 1015,25 1012,45 C1010,75 965,80 945,85 C1000,80 1010,110 1005,130 C980,150 960,125 940,95 C935,140 910,160 890,145 C880,110 905,95 930,85 C880,100 855,80 860,55 C870,30 900,40 930,72 M938,55 V48 M950,88 L960,98 M926,66 L918,60 M938,95 V108 M955,78 H968" />
      <path d="M0,225 L60,228 Q85,240 75,270 Q70,320 40,332 L0,335 M0,250 L70,330 M15,255 L22,290 35,255 M5,292 L35,290 M70,355 L210,300 Q225,295 230,310 L252,368 M68,355 L90,368 M130,368 L205,342 Q215,345 210,355 L180,368 M0,400 Q30,405 32,430 L60,570 Q60,582 45,582 L0,590 M0,575 L55,570 M0,470 Q20,480 20,510 L0,515" />
      <path d="M480,368 C490,310 560,250 610,268 C660,285 680,310 670,330 Q655,335 640,320 M565,320 Q600,280 640,295 Q670,300 672,325 M600,370 C590,330 640,320 660,335 M600,370 C610,410 640,415 670,412 Q700,425 692,445 Q670,460 625,445 M695,280 Q710,245 780,242 C830,250 870,290 878,345 Q910,335 914,360 C910,390 880,410 850,428 Q825,425 830,402 M682,325 C680,290 720,270 750,270 Q790,280 808,305 M682,325 Q700,335 720,315 C760,300 785,350 770,375 C760,410 710,410 708,435 Q710,450 735,445 L790,410 832,402" />
      <Photo x={762} y={580} s={1.03} />
      <path d="M700,488 L780,462 Q790,455 800,465 L830,485 M695,690 L720,712 Q735,725 750,708 L800,665 M640,585 Q620,600 630,615 L645,635 M880,540 L892,570 882,590" />
      <path d="M945,570 Q940,590 945,610 C955,650 1010,655 1040,645 C1075,630 1080,580 1062,550 Q1050,530 1000,540 Q980,545 985,565 Q1000,575 1030,560 L1025,570 Q1015,590 1030,598 M985,500 L985,440 Q985,420 1000,420 Q1015,425 1015,445 L1025,510 M1030,510 L1042,440 Q1050,425 1065,435 L1062,550 M932,515 Q940,500 955,510 Q965,530 960,550 Q945,560 935,545Z M962,500 Q985,495 990,520 L985,545 Q970,550 962,530Z" />
      <path d="M208,545 Q230,600 258,620 Q260,640 240,680 Q250,740 265,750 L300,750 Q340,745 342,725 Q335,705 310,715 Q290,705 290,685 Q340,705 380,692 M382,680 Q390,735 410,745 L455,742 Q480,735 478,715 Q465,700 450,708 L450,690 Q470,660 467,615 M425,710 Q440,710 440,740 M215,545 Q240,590 325,590 M325,560 Q315,630 380,632 Q410,620 395,548 M400,620 C450,615 500,600 512,590 Q515,560 515,548 M480,560 L490,570 500,555 M490,570 V580 M478,580 Q490,590 502,580" />
      <path d="M965,705 L985,745 1045,755 1030,772 M965,705 L960,772 M540,772 L640,708 Q660,702 660,715 L632,772 M610,725 L612,742 625,735 628,755 640,750 M695,772 Q720,745 755,772 M760,772 Q765,750 778,750 Q780,765 770,775 M80,800 Q90,765 150,775 M0,890 L25,900 M0,810 Q45,800 45,840 M62,1005 V1052 M10,1052 L205,1072 208,1080 M10,1052 Q5,1065 5,1080 M290,1052 L420,1062 432,1052 M520,1080 Q550,1050 590,1070 L600,1080 M640,1075 Q660,1080 670,1060 M735,1052 L755,1065 735,1080 M812,1060 Q820,1080 850,1080 Q890,1070 890,1052 M930,1055 L1000,1052 M980,1052 L1080,1060 M455,1052 V1080 M970,270 C985,240 1040,220 1080,225 M975,300 C980,340 1030,365 1080,368 M972,300 V270 M1050,190 Q1060,175 1080,170 M1050,190 L1065,225 M935,280 Q930,262 950,265 Q965,280 955,310 Q985,315 970,325 L950,325 Q930,310 935,280 M952,335 Q945,370 962,380 Q980,375 978,355 Q970,335 952,335" />
    </Tile>
  </WallpaperSvg>
);

/* ---------- Emoji ---------- */

type Mood = 'grin' | 'unamused' | 'joy';

const DefsSvg = styled.svg`
  position: absolute;
`;

const EmojiSvg = styled.svg`
  display: block;
  flex: none;
`;

const EmojiDefs = () => (
  <DefsSvg width="0" height="0" aria-hidden="true">
    <defs>
      <radialGradient id="skin" cx="50%" cy="52%" r="50%">
        <stop offset="0" stopColor="#fde24a" />
        <stop offset="0.68" stopColor="#fcd535" />
        <stop offset="0.88" stopColor="#f9b02a" />
        <stop offset="1" stopColor="#f28a1c" />
      </radialGradient>
      <linearGradient id="shine" x1="0" y1="0" x2="0" y2="1">
        <stop offset="0" stopColor="#fffbe6" stopOpacity="0.95" />
        <stop offset="1" stopColor="#fde873" stopOpacity="0.1" />
      </linearGradient>
      <linearGradient id="tear" x1="0" y1="0" x2="0" y2="1">
        <stop offset="0" stopColor="#c5f0f6" />
        <stop offset="1" stopColor="#2eb4d8" />
      </linearGradient>
      <linearGradient id="teeth" x1="0" y1="0" x2="0" y2="1">
        <stop offset="0" stopColor="#ffffff" />
        <stop offset="1" stopColor="#dcdcde" />
      </linearGradient>
    </defs>
  </DefsSvg>
);

const Emoji = ({ mood, size }: { mood: Mood; size: number }) => (
  <EmojiSvg width={size} height={size} viewBox="0 0 72 72" role="img" aria-label={mood}>
    <circle cx="36" cy="36" r="33" fill="url(#skin)" />
    <ellipse cx="36" cy="20" rx="24.5" ry="15" fill="url(#shine)" />
    {mood === 'grin' && (
      <>
        <circle cx="23.8" cy="28.5" r="4.7" fill="#704608" />
        <circle cx="47.9" cy="28.5" r="4.7" fill="#704608" />
        <ellipse cx="23.8" cy="27" rx="2" ry="1.5" fill="#b39160" />
        <ellipse cx="47.9" cy="27" rx="2" ry="1.5" fill="#b39160" />
        <path d="M12.4,38 Q36,45 59.4,38 Q60,59.5 36,59.5 Q12,59.5 12.4,38Z" fill="#6d3f05" />
        <path d="M14,40 Q36,46.5 58,40 Q58,45 54.6,46.8 Q36,52 17.2,46.8 Q14,45 14,40Z" fill="url(#teeth)" />
        <path d="M27.5,56.5 Q36,50 44.5,56.5 Q36,60 27.5,56.5Z" fill="#f97e87" />
      </>
    )}
    {mood === 'joy' && (
      <>
        <g fill="none" stroke="#6d4408" strokeLinecap="round">
          <path d="M10,27.5 Q14,20.5 23,20.3 M49,20.3 Q58,20.5 62,27.5" strokeWidth="2" />
          <path d="M18.5,34 Q20,27.5 24.5,28 Q28.5,28.5 29.5,34 M43.5,34 Q44.5,28.5 48.5,28 Q53,27.5 54.5,34" strokeWidth="4" />
        </g>
        <path d="M14.5,41.5 Q36,46 57.5,41.5 Q58,60 36,60 Q14,60 14.5,41.5Z" fill="#6d3f05" />
        <path d="M16,43 Q36,47 56,43 Q56,47 53.5,49 Q36,52 18.5,49 Q16,47 16,43Z" fill="url(#teeth)" />
        <path d="M27.5,57.5 Q36,51 44.5,57.5 Q36,60.5 27.5,57.5Z" fill="#f97e87" />
        <path d="M13,37 Q15,49 12,52.5 Q8,56 4,53.5 Q0,49.5 3,45.5 Q6,42.5 13,37Z M59,37 Q57,49 60,52.5 Q64,56 68,53.5 Q72,49.5 69,45.5 Q66,42.5 59,37Z" fill="url(#tear)" />
      </>
    )}
    {mood === 'unamused' && (
      <>
        <g fill="none" stroke="#754807" strokeLinecap="round">
          <path d="M10.5,28.3 Q15,22 24.5,23.5 M47.5,23.5 Q57,22 61.5,28.3" strokeWidth="2.2" />
          <path d="M14.3,36 Q20,33 28,34.5 M43.3,36 Q49,33 57,34.5" strokeWidth="2.2" />
        </g>
        <path d="M20,34.5 H28.8 Q29.5,41.5 24.5,41.5 Q20,41 20,34.5Z M49,34.5 H57.8 Q58.5,41.5 53.5,41.5 Q49,41 49,34.5Z" fill="#754807" />
        <path d="M26.7,56.5 Q29,49 36.5,49 Q44,49 46.5,56.5 Q36.5,50.5 26.7,56.5Z" fill="#754807" stroke="#754807" strokeWidth="1" strokeLinejoin="round" />
      </>
    )}
  </EmojiSvg>
);

/* ---------- Message pieces ---------- */

const Tail = ({ out }: { out?: boolean }) => (
  <TailSvg $out={out} width="16" height="24" viewBox="0 0 16 24">
    <path d="M0,0 H12 Q15,0 15.8,2 Q16.2,4 14.8,6 L2,21 V24 H0Z" fill={out ? '#005d4b' : '#1f2c34'} />
  </TailSvg>
);

const Ticks = () => (
  <svg width="34" height="22" viewBox="0 0 34 22" fill="none" stroke="#53bdeb" strokeWidth="2.6">
    <path d="M2.8,13 L8.8,19.8 22.5,2.2 M16.3,17.5 L18.8,19.8 32,2.2" strokeLinejoin="round" strokeLinecap="round" />
  </svg>
);

type MsgProps = {
  out?: boolean;
  tail?: boolean;
  w: number;
  h: number;
  time: string;
  text?: string;
  track?: number;
  emoji?: Mood;
  quote?: { name: string; color: string; body: React.ReactNode };
};

const Message = ({ out, tail, w, h, time, text, track, emoji, quote }: MsgProps) => (
  <Bubble $out={out} $tail={tail} $w={w} $h={h}>
    {tail && <Tail out={out} />}
    {quote && (
      <Quote>
        <QuoteBar $color={quote.color} />
        <QuoteText>
          <QuoteName $color={quote.color}>{quote.name}</QuoteName>
          {quote.body}
        </QuoteText>
      </Quote>
    )}
    <BubbleRow $out={out}>
      <Body $top={emoji ? (text ? 6 : 5) : quote ? 8 : 11} $track={track}>
        {emoji && (
          <EmojiSlot $large={!text}>
            <Emoji mood={emoji} size={text ? 48 : 72} />
          </EmojiSlot>
        )}
        {emoji && text ? <InlineText>{text}</InlineText> : text}
      </Body>
      <Meta $out={out} $low={!!emoji || !!quote}>
        <Time $wide={time.endsWith('0')}>{time}</Time>
        {out && <Ticks />}
      </Meta>
    </BubbleRow>
  </Bubble>
);

export default function App() {
  return (
    <>
      <Global />
      <EmojiDefs />
      <Screen>
        <Wallpaper />
        <Top>
          <StatusBar>
            <StatusSide>
              <svg width="28" height="22" viewBox="0 0 28 22" fill="#d3d6d8">
                <text x="0" y="10" fontSize="9" fontWeight="700" fontFamily="Inter, sans-serif">4G</text>
                <path d="M2,17h3v4h-3z M9,13h3v8h-3z M16,8h3v13h-3z M24,3h3v18h-3z M1,14l3,-2v4z M8,14l-3,-2v4z" />
              </svg>
              <StatusText $ml={7.5} $track={-0.5}>0. 00KB/s</StatusText>
            </StatusSide>
            <StatusText>10:44</StatusText>
            <StatusSide $end>
              <svg width="20" height="20" viewBox="0 0 20 20" fill="none" stroke="#d3d6d8" strokeWidth="1.3">
                <circle cx="9.8" cy="11" r="8.2" />
                <path d="M9.8,5.5 V11.5 H13.5" />
                <path d="M1,4.5 Q2,1.5 5,1.8Z M18.7,4.5 Q17.7,1.5 14.7,1.8Z" fill="#d3d6d8" />
              </svg>
              <BarIcon $ml={4} width="42" height="20" viewBox="0 0 42 20" fill="none" stroke="#fff">
                <path d="M2,9.5 Q9,9 15,4.5 Q21,1.2 27,4.5 Q31,8.5 36,9.5 Q39,10 40,12 M7,10.5 Q12,16 18,17.3 Q24,17.5 28,13.5 L32,9.5" strokeWidth="2.3" strokeLinecap="round" strokeLinejoin="round" />
                <circle cx="20" cy="10.3" r="3" strokeWidth="2.2" />
              </BarIcon>
              <BarIcon $ml={1} width="30" height="22" viewBox="0 0 30 22" fill="none" stroke="#d3d6d8" strokeWidth="1.3" strokeLinejoin="round">
                <path d="M4,2.5 L1.8,4.5 Q0,8 5,14 Q11,21 16,20.3 L19.5,17.5 Q19.5,16 15,13.7 L12.3,16 Q9,14 6.3,9.5 L8.5,7 Q7,3 5.5,2.2Z" />
                <text x="11.5" y="11.5" fontSize="13.5" fontFamily="Inter, sans-serif" fill="#d3d6d8" stroke="none" textLength="17" lengthAdjust="spacingAndGlyphs">HD</text>
              </BarIcon>
              <StatusText $ml={9} $mr={14} $track={-2.3}>56%</StatusText>
              <BarIcon width="41" height="22" viewBox="0 -2 41 22">
                <rect x="0.7" y="-0.3" width="36.5" height="17" rx="1.8" fill="none" stroke="#d3d6d8" strokeWidth="1.3" />
                <path d="M2.5,1.5h18v13.5h-18z M38.5,5.5h2v6h-2z" fill="#e6e8e9" />
              </BarIcon>
            </StatusSide>
          </StatusBar>
          <AppBar>
            <svg width="33" height="34" viewBox="0 0 33 34" fill="none" stroke="#fff" strokeWidth="3.8">
              <path d="M32,17 H3.5 M17.3,2.5 L3,17 17.3,31.5" />
            </svg>
            <BarIcon $ml={7} width="70" height="70" viewBox="0 0 70 70">
              <clipPath id="avatar"><circle cx="35" cy="35" r="34" /></clipPath>
              <circle cx="35" cy="35" r="35" fill="#627884" />
              <g fill="#cfd6df" clipPath="url(#avatar)">
                <circle cx="35" cy="30.5" r="12" />
                <path d="M12,60 Q18,47 35,47 Q52,47 58,60 V70 H12Z" />
              </g>
            </BarIcon>
            <Contact>Pantu.</Contact>
            <svg width="41" height="28" viewBox="0 0 41 28" fill="#fff">
              <rect x="0.2" y="1.5" width="29" height="26.3" rx="4.6" />
              <path d="M31,10.5 L37,5.2 Q40.2,3.5 40.2,6.5 V22.5 Q40.2,25.5 37,23.8 L31,18.5Z" />
            </svg>
            <BarIcon $ml={56} width="38" height="38" viewBox="1.9 1.6 20.2 20.2" fill="#fff">
              <path d="M6.62,10.79c1.44,2.83 3.76,5.14 6.59,6.59l2.2,-2.2c0.27,-0.27 0.67,-0.36 1.02,-0.24 1.12,0.37 2.33,0.57 3.57,0.57 0.55,0 1,0.45 1,1V20c0,0.55 -0.45,1 -1,1 -9.39,0 -17,-7.61 -17,-17 0,-0.55 0.45,-1 1,-1h3.5c0.55,0 1,0.45 1,1 0,1.25 0.2,2.45 0.57,3.57 0.11,0.35 0.03,0.74 -0.25,1.02l-2.2,2.2z" />
            </BarIcon>
            <BarIcon $ml={61} width="8" height="34" viewBox="0 0 8 34" fill="#fff">
              <circle cx="4" cy="5" r="4" /><circle cx="4" cy="17" r="4" /><circle cx="4" cy="29" r="4" />
            </BarIcon>
          </AppBar>
        </Top>
        <Messages>
          <List>
            <Message w={190} h={94} emoji="grin" time="22:30" />
            <Message w={182} h={94} emoji="grin" time="22:31" />
            <Message
              w={256} h={158} text="How it was" track={-0.45} time="22:31"
              quote={{ name: 'Pantu.', color: '#8f7cdb', body: <QuoteEmoji><Emoji mood="grin" size={33} /></QuoteEmoji> }}
            />
            <Message out tail w={182} h={60} text="Ntg" track={-0.4} time="22:31" />
            <Message tail w={293} h={60} text="It was scary na" track={-0.35} time="22:31" />
            <Message out tail w={217} h={70} emoji="joy" text="no" track={-0.6} time="22:31" />
            <Message
              tail w={256} h={198} emoji="unamused" time="22:31"
              quote={{ name: 'You', color: '#029273', body: <QuoteBody>Ntg</QuoteBody> }}
            />
            <Message out tail w={212} h={94} emoji="joy" time="22:31" />
            <Message tail w={174} h={60} text="Gooo" track={-0.5} time="22:31" />
            <Message out tail w={266} h={60} text="Shape out" track={0.05} time="22:31" />
          </List>
        </Messages>
        <Footer>
          <Composer>
            <svg width="42" height="42" viewBox="0 0 42 42">
              <circle cx="21.3" cy="20.5" r="20.3" fill="#8696a0" />
              <g fill="#1f2c34">
                <ellipse cx="15" cy="14.7" rx="3.2" ry="4.2" /><ellipse cx="27.5" cy="14.7" rx="3.2" ry="4.2" />
                <path d="M8,22.5 Q21.3,25 34.5,22.5 Q32.5,34 21.3,34 Q10,34 8,22.5Z" />
              </g>
              <path d="M10.8,25.8 Q21.3,27.8 31.8,25.8 Q29.3,29.3 21.3,29.3 Q13.3,29.3 10.8,25.8Z" fill="#8696a0" />
            </svg>
            <Placeholder>Message</Placeholder>
            <svg width="43" height="41" viewBox="0 0 130 122" fill="none" stroke="#8696a0" strokeWidth="9">
              <path d="M67,16 L112,59 C126,75 121,96 108,106 C94,116 80,113 71,104 L15,49 C3,37 7,20 17,13 C28,7 38,9 46,17 L92,62 C99,70 95,79 89,81 C83,84 78,82 73,77 L40,44" />
            </svg>
            <BarIcon $ml={46} width="40" height="40" viewBox="0 0 40 40">
              <path d="M12,5 L14.5,2 Q16,0.5 18,0.5 H22 Q24,0.5 25.5,2 L28,5 H34 Q39.5,5 39.5,11 V31 Q39.5,37.5 33,37.5 H7 Q0.5,37.5 0.5,31 V11 Q0.5,5 6,5Z" fill="#8696a0" />
              <circle cx="20" cy="20" r="8.3" fill="none" stroke="#1f2c34" strokeWidth="3.2" />
            </BarIcon>
          </Composer>
          <MicButton aria-label="Record">
            <svg width="32" height="42" viewBox="0 0 32 42" fill="none" stroke="#fff" strokeWidth="4">
              <rect x="10" y="1" width="12" height="24" rx="6" fill="#fff" stroke="none" />
              <path d="M3.3,19 Q3.3,31.5 16,31.5 Q28.7,31.5 28.7,19 M16,31 V40.5" />
            </svg>
          </MicButton>
        </Footer>
        <ScrollDown aria-label="Scroll to latest">
          <BarIcon width="64" height="64" viewBox="0 1 64 64" fill="none" stroke="#8696a0" strokeWidth="2.8">
            <path d="M20.7,25.5 L32,35.5 43.3,25.5 M20.7,35.5 L32,45.5 43.3,35.5" />
          </BarIcon>
        </ScrollDown>
      </Screen>
    </>
  );
}
